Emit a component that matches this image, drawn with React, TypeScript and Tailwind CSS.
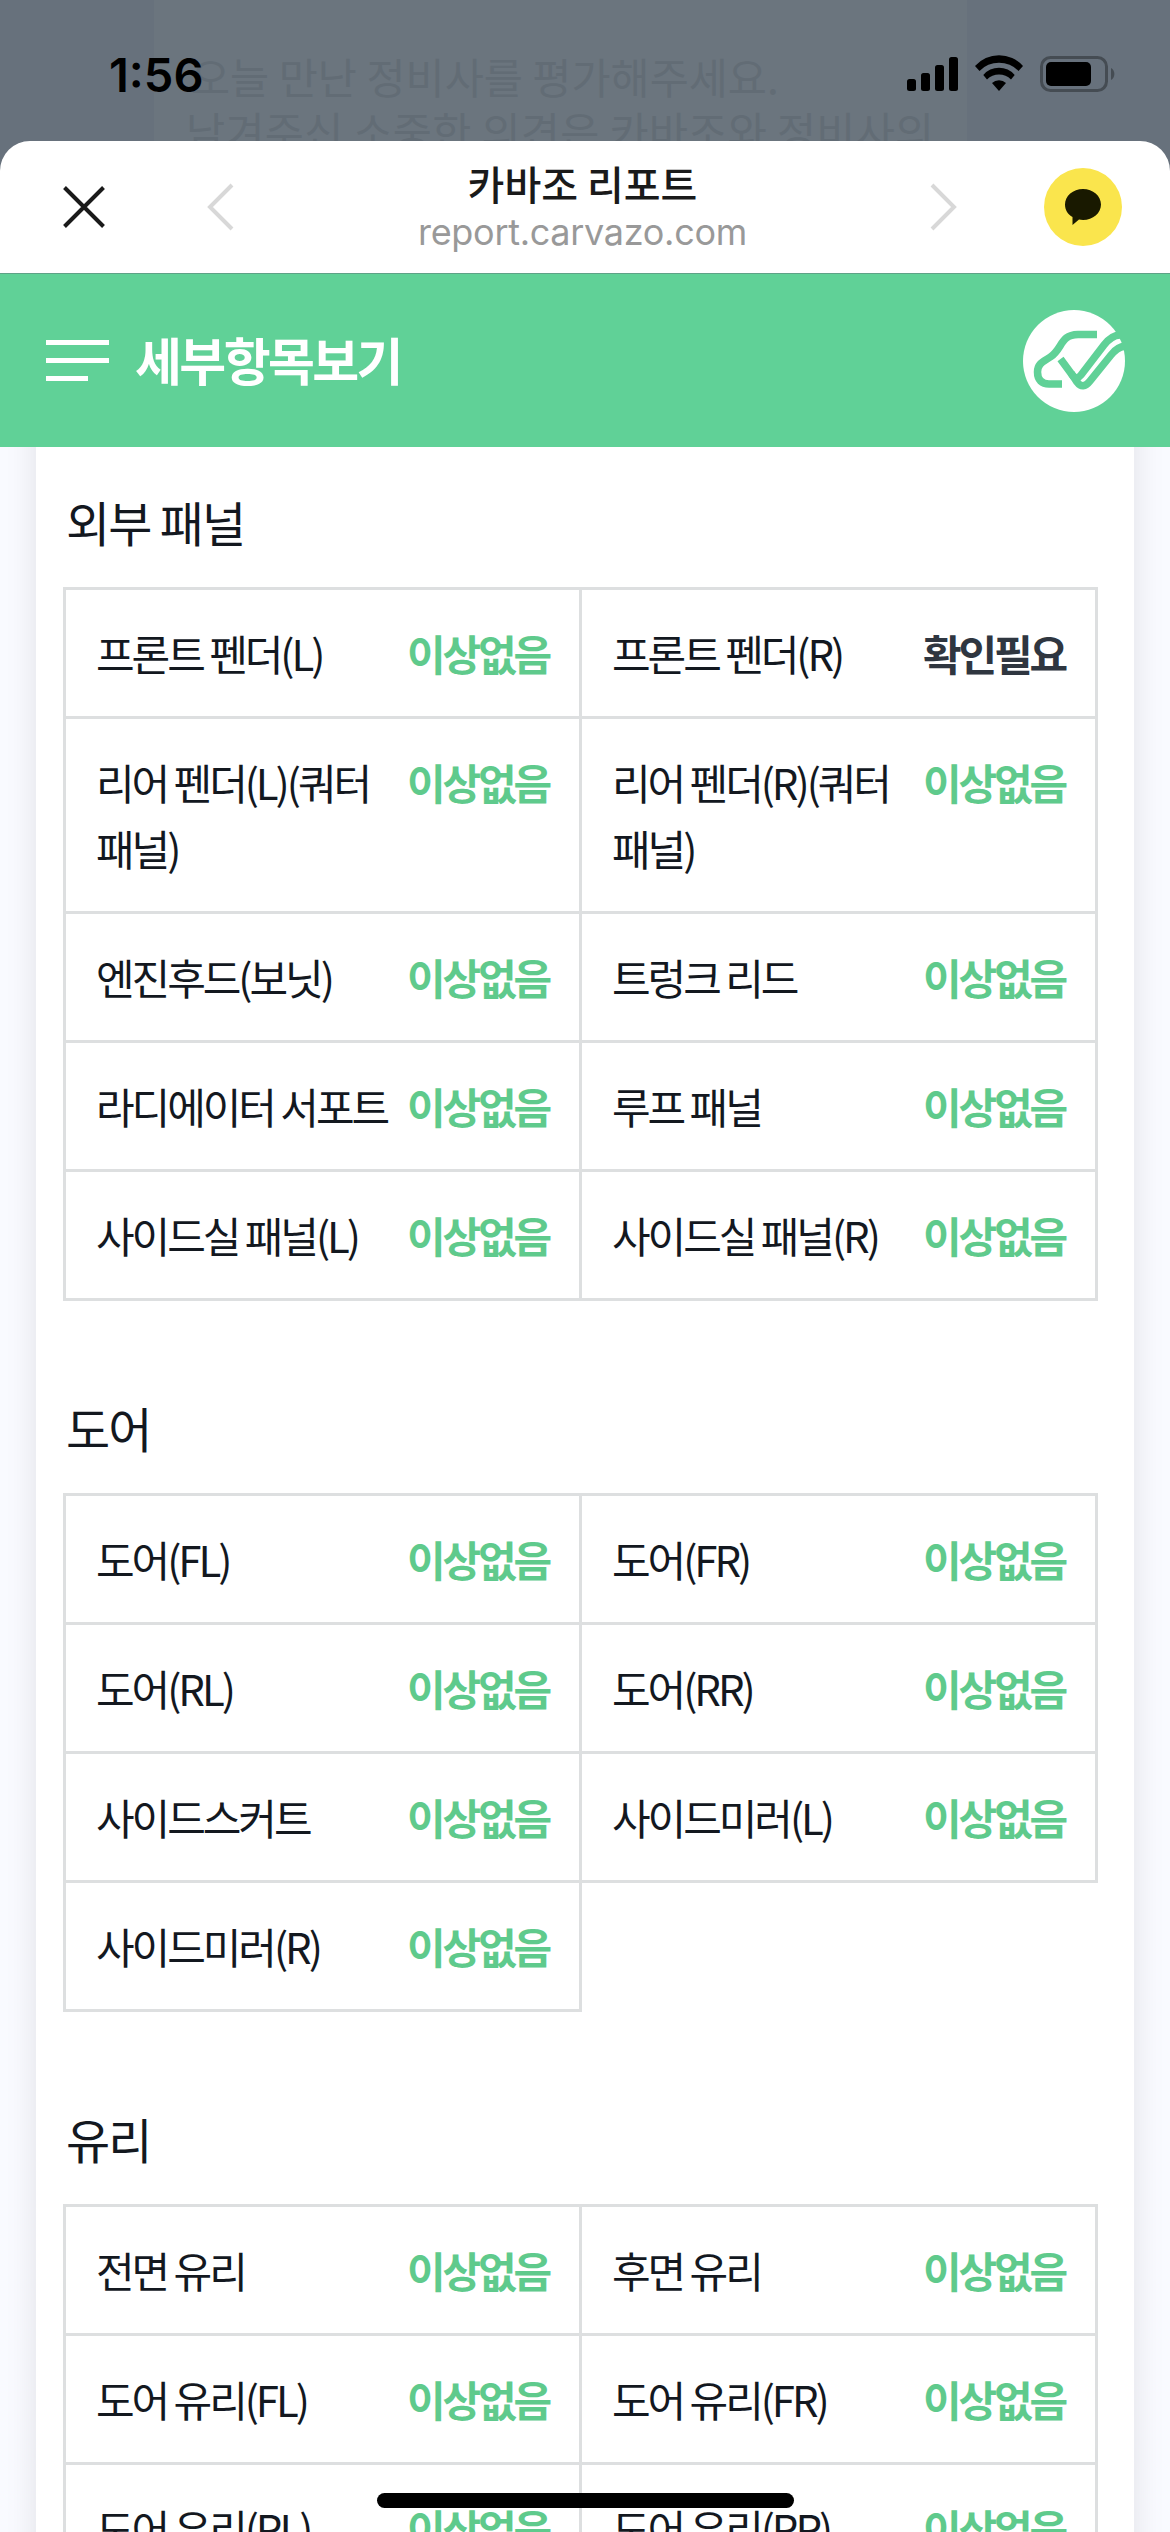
import React from 'react';

type Item = { label: string; warn?: boolean };
type Section = { title: string; items: Item[] };

const sections: Section[] = [
  {
    title: '외부 패널',
    items: [
      { label: '프론트 펜더(L)' },
      { label: '프론트 펜더(R)', warn: true },
      { label: '리어 펜더(L)(쿼터패널)' },
      { label: '리어 펜더(R)(쿼터패널)' },
      { label: '엔진후드(보닛)' },
      { label: '트렁크 리드' },
      { label: '라디에이터 서포트' },
      { label: '루프 패널' },
      { label: '사이드실 패널(L)' },
      { label: '사이드실 패널(R)' },
    ],
  },
  {
    title: '도어',
    items: [
      { label: '도어(FL)' },
      { label: '도어(FR)' },
      { label: '도어(RL)' },
      { label: '도어(RR)' },
      { label: '사이드스커트' },
      { label: '사이드미러(L)' },
      { label: '사이드미러(R)' },
    ],
  },
  {
    title: '유리',
    items: [
      { label: '전면 유리' },
      { label: '후면 유리' },
      { label: '도어 유리(FL)' },
      { label: '도어 유리(FR)' },
      { label: '도어 유리(RL)' },
      { label: '도어 유리(RR)' },
    ],
  },
];

const StatusBar: React.FC = () => (
  <div className="relative h-[141px] shrink-0">
    {/* page behind the sheet */}
    <div className="ml-[154px] h-[180px] w-[813px] overflow-hidden bg-[#6b757e] pt-[49px] pl-[32px] text-[42.500px] leading-[54px] whitespace-nowrap text-[#626c75]">
      <p className="pl-[5px]">오늘 만난 정비사를 평가해주세요.</p>
      <p className="tracking-[0.300px]">남겨주신 소중한 의견은 카바조와 정비사의</p>
    </div>
    <div className="absolute inset-x-0 top-0 flex h-[150px] items-center justify-between pr-[54px] pl-[109px]">
      <span className="font-[Inter] text-[47px] font-semibold text-black">1:56</span>
      <svg width="210" height="42" viewBox="0 0 210 42" className="-mt-[2px]">
        <rect x="1" y="26" width="9" height="12" rx="2.5" />
        <rect x="15" y="20" width="9" height="18" rx="2.5" />
        <rect x="29" y="12" width="9" height="26" rx="2.5" />
        <rect x="43" y="4" width="9" height="34" rx="2.5" />
        <path d="M69 13A32 32 0 0 1 117 13L112.500 18A27 27 0 0 0 73.500 18z" />
        <path d="M77.300 22A20.500 20.500 0 0 1 108.700 22L105 26.500A17 17 0 0 0 81 26.500z" />
        <path d="M86 30A10 10 0 0 1 100 30L93 38z" />
        <rect x="135.500" y="4.500" width="65" height="33" rx="9" fill="none" stroke="#454c53" strokeWidth="3" />
        <rect x="140" y="9" width="45" height="24" rx="5" />
        <path d="M205 15a7 7 0 0 1 0 12z" fill="#454c53" />
      </svg>
    </div>
  </div>
);

const BrowserBar: React.FC = () => (
  <div className="flex h-[132px] shrink-0 items-center">
    <svg width="60" height="60" viewBox="0 0 60 60" fill="none" stroke="#1a1a1a" strokeWidth="4" className="ml-[54px]">
      <path d="M10.500 10.500 49.500 49.500M49.500 10.500 10.500 49.500" />
    </svg>
    <svg width="30" height="50" viewBox="0 0 30 50" fill="none" stroke="#d8d8d8" strokeWidth="4" className="ml-[91px]">
      <path d="M27 3 5 25 27 47" />
    </svg>
    <div className="mx-auto flex flex-col items-center">
      <p className="pt-[3px] text-[40px] leading-[44px] font-medium text-[#1a1a1a]">카바조 리포트</p>
      <p className="pt-[3px] font-[Inter] text-[36px] leading-[48px] tracking-[-0.300px] text-[#999]">report.carvazo.com</p>
    </div>
    <svg width="30" height="50" viewBox="0 0 30 50" fill="none" stroke="#d8d8d8" strokeWidth="4" className="mr-[84px]">
      <path d="M2 3 24 25 2 47" />
    </svg>
    <svg width="78" height="78" viewBox="0 0 78 78" className="mr-[48px]">
      <circle cx="39" cy="39" r="39" fill="#fae54d" />
      <path d="M39 21c10 0 18 7 18 15.500S49 52 39 52c-1.500 0-2.800-.1-4-.4L28.500 57V49C24 46.500 21 42 21 36.500 21 28 29 21 39 21z" fill="#191900" />
    </svg>
  </div>
);

const ReportHeader: React.FC = () => (
  <header className="flex h-[174px] shrink-0 items-center border-t border-[#5fa287] bg-[#60d197] pr-[45px] pl-[46px]">
    <div className="flex w-[63px] flex-col gap-[13px]">
      <div className="h-[5px] bg-white" />
      <div className="h-[5px] bg-white" />
      <div className="h-[5px] w-[42px] bg-white" />
    </div>
    <h1 className="-mt-[3px] ml-[26px] text-[51px] font-bold tracking-[-2.600px] text-white">세부항목보기</h1>
    <svg width="102" height="102" viewBox="0 0 102 102" className="ml-auto" fill="none" stroke="#60d197" strokeWidth="7.500">
      <circle cx="51" cy="51" r="51" fill="#fff" stroke="none" />
      <path d="M74 24.500H55C37 25 40 38 28 46.500C21 51.500 14.500 53 14.500 62C14.500 70 19 74 26 74H39" />
      <path d="M37.500 49 50 66Q54 70 58 65L81 35Q89 25 97 25" />
      <path d="M48 63 54 72Q60 80 67 71L88 45Q95 36 104 36" />
    </svg>
  </header>
);

const InspectionCell: React.FC<{ item: Item }> = ({ item }) => (
  <li className="-mt-[3px] -ml-[3px] flex w-[519px] justify-between border-[3px] border-[#dddfe0] px-[30px] py-[30px] text-[42px] leading-[66px]">
    <span className="w-[300px] tracking-[-3.050px] break-all text-[#13181f]">{item.label}</span>
    <b className={item.warn ? 'shrink-0 font-bold tracking-[-3.150px] text-[#2f3640]' : 'shrink-0 font-bold tracking-[-3.150px] text-[#5fca8c]'}>
      {item.warn ? '확인필요' : '이상없음'}
    </b>
  </li>
);

export default function App() {
  return (
    <div className="relative flex h-[2532px] w-[1170px] flex-col overflow-hidden bg-[#67717c] font-['Noto_Sans_CJK_KR',sans-serif]">
      <StatusBar />
      <div className="relative flex min-h-0 flex-1 flex-col overflow-hidden rounded-t-[30px] bg-white">
        <BrowserBar />
        <ReportHeader />
        <main className="min-h-0 flex-1 overflow-hidden bg-[#f9faff]">
          <div className="-mt-[40px] mx-[36px] h-[2300px] bg-white px-[27px] pt-[78px] shadow-[0_0_30px_rgba(0,0,0,0.1)]">
            {sections.map((s) => (
              <section key={s.title} className="mb-[90px]">
                <h2 className="h-[102px] pl-[3px] text-[48px] leading-[72px] tracking-[-1.800px] text-[#13181f]">{s.title}</h2>
                <ul className="flex flex-wrap pt-[3px] pl-[3px]">
                  {s.items.map((item) => (
                    <InspectionCell key={item.label} item={item} />
                  ))}
                </ul>
              </section>
            ))}
          </div>
        </main>
      </div>
      {/* home indicator */}
      <div className="absolute bottom-[24px] left-[377px] h-[15px] w-[417px] rounded-full bg-black" />
    </div>
  );
}
